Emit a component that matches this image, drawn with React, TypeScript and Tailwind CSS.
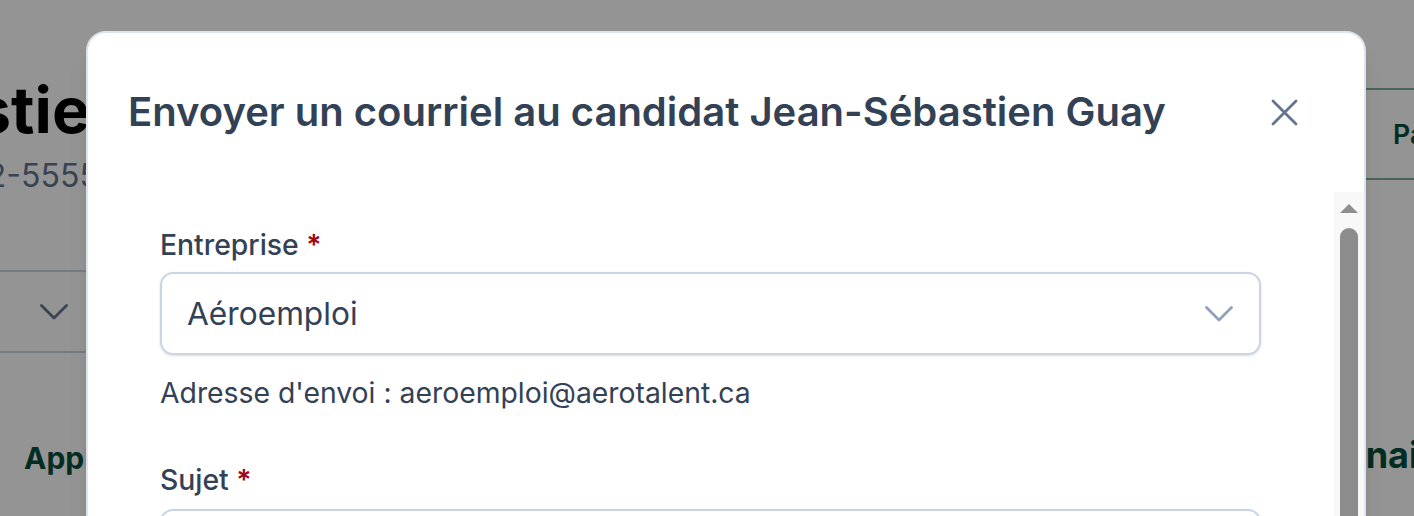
import React from "react";

function Chevron({ className }: { className?: string }) {
  return (
    <svg width="28" height="16" viewBox="0 0 28 16" fill="none" className={className}>
      <path d="M1.5 1.5 L14 14 L26.5 1.5" stroke="currentColor" strokeWidth="2.8" strokeLinecap="round" strokeLinejoin="round" />
    </svg>
  );
}

function CloseIcon() {
  return (
    <svg width="27" height="27" viewBox="0 0 27 27" fill="none" className="text-slate-500">
      <path d="M2 2 L25 25 M25 2 L2 25" stroke="currentColor" strokeWidth="2.8" strokeLinecap="round" />
    </svg>
  );
}

export default function App() {
  return (
    <div className="relative h-[516px] w-[1414px] overflow-hidden bg-white font-['Inter','Noto_Sans',sans-serif]">
      {/* Underlying page */}
      <div className="flex flex-col">
        <div className="flex justify-between">
          <div className="flex w-[96px] shrink-0 flex-col pt-[71px]">
            <h1 className="-ml-[366px] whitespace-nowrap text-[64px] font-bold leading-[77px] text-black">
              Jean-Sébastien Guay
            </h1>
            <p className="-ml-[119px] mt-[4px] whitespace-nowrap text-[32px] leading-[48px] text-slate-500">
              514-222-5555
            </p>
            <div className="-ml-[400px] mt-[70px] flex h-[83px] items-center justify-end rounded-[13px] border-2 border-slate-300 pr-[26px]">
              <Chevron className="text-slate-500" />
            </div>
          </div>
          <div className="pt-[88px]">
            <button className="-mr-[236px] flex h-[92px] w-[300px] items-center rounded-[13px] border-2 border-[#7fae98] pl-[41px] text-[26.67px] font-semibold text-[#064e3b]">
              Partager le profil
            </button>
          </div>
        </div>
        <div className="mt-[80px] flex items-start justify-between">
          <span className="ml-[24px] mt-[5px] text-[30px] font-bold leading-[40px] text-[#064e3b]">Applications</span>
          <span className="-mr-[40px] text-[36px] font-bold leading-[44px] text-[#064e3b]">Questionnaire</span>
        </div>
      </div>

      {/* Overlay */}
      <div className="absolute inset-0 bg-black/[0.42]" />

      {/* Modal */}
      <div className="absolute left-[86px] top-[31px] flex h-[620px] w-[1280px] flex-col rounded-[20px] border-2 border-[#dde4ee] bg-white shadow-xl">
        <div className="flex items-center justify-between pb-[50px] pl-[40px] pr-[66px] pt-[49px]">
          <h2 className="text-[40px] font-semibold leading-[60px] text-[#334155]">
            Envoyer un courriel au candidat Jean-Sébastien Guay
          </h2>
          <CloseIcon />
        </div>
        <div className="flex min-h-0 flex-1">
          <div className="flex-1 pl-[72px] pr-[73px] pt-[33px]">
            <label className="block text-[28.33px] font-medium leading-[40px] text-[#334155]">
              Entreprise <span className="font-semibold text-red-800">*</span>
            </label>
            <div className="mt-[7px] flex h-[83px] items-center justify-between rounded-[13px] border-2 border-[#cbd5e1] pl-[25px] pr-[26px] shadow-sm">
              <span className="text-[31.67px] leading-[48px] text-[#334155]">Aéroemploi</span>
              <Chevron className="text-slate-400" />
            </div>
            <p className="mt-[18px] text-[28.33px] leading-[40px] text-[#334155]">
              Adresse d'envoi : aeroemploi@aerotalent.ca
            </p>
            <label className="mt-[47px] block text-[28.33px] font-medium leading-[40px] text-[#334155]">
              Sujet <span className="font-semibold text-red-800">*</span>
            </label>
            <div className="mt-[9px] h-[83px] rounded-[13px] border-2 border-[#cbd5e1] shadow-sm" />
          </div>
          <div className="flex w-[30px] shrink-0 flex-col items-center bg-[#f8f8f8] pt-[12px]">
            <div className="h-0 w-0 border-x-[9px] border-b-[9px] border-x-transparent border-b-[#8e8e8e]" />
            <div className="mt-[15px] h-[400px] w-[18px] rounded-t-full bg-[#8c8c8c]" />
          </div>
        </div>
      </div>
    </div>
  );
}
